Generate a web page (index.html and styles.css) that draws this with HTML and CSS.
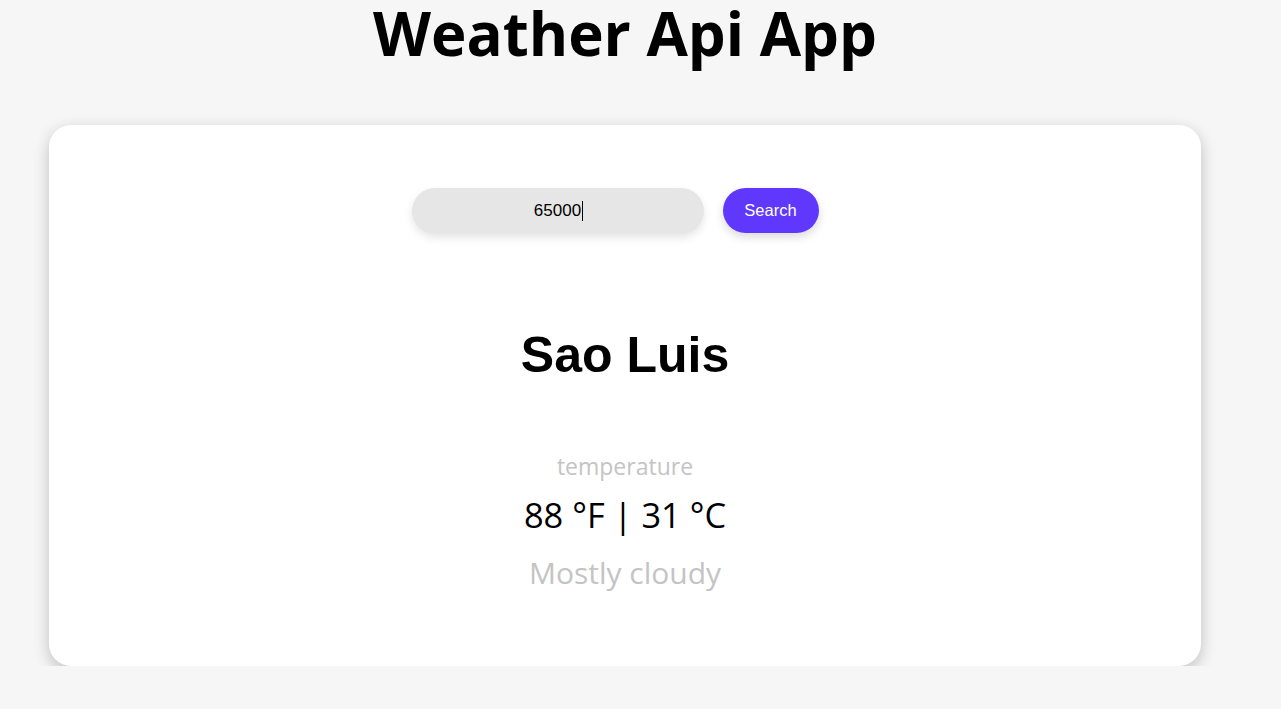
FILE: index.html
```html
<!DOCTYPE html>
<html lang="en">
<head>
<meta charset="utf-8">
<title>Weather Api App</title>
<link rel="stylesheet" href="styles.css">
</head>
<body>
<div class="app">
  <h1 class="title">Weather Api App</h1>
  <main class="card">
    <form class="search" onsubmit="return false">
      <div class="search-field">
        <input class="search-input" type="text" value="65000" autofocus>
        <span class="caret"></span>
      </div>
      <button class="search-btn" type="submit">Search</button>
    </form>
    <h2 class="city">Sao Luis</h2>
    <div class="weather">
      <p class="label">temperature</p>
      <p class="temp">88 °F | 31 °C</p>
      <p class="desc">Mostly cloudy</p>
    </div>
  </main>
</div>
</body>
</html>
```
FILE: styles.css
```css
html, body {
  margin: 0;
  padding: 0;
  background: #f6f6f6;
}
body {
  font-family: "Open Sans", "Noto Sans", sans-serif;
  color: #000;
}
.app {
  width: 1250px;
  display: flex;
  flex-direction: column;
  align-items: center;
}
.title {
  margin: 0;
  font-size: 60px;
  font-weight: 700;
  line-height: 67px;
}
.card {
  box-sizing: border-box;
  width: 1152px;
  height: 541px;
  margin-top: 58px;
  background: #fff;
  border-radius: 22px;
  box-shadow: 0 5px 16px rgba(0, 0, 0, 0.22);
  display: flex;
  flex-direction: column;
  align-items: center;
  padding-top: 63px;
}
.search {
  display: flex;
  gap: 19px;
  margin-left: -20px;
}
.search-field {
  position: relative;
  display: flex;
}
.search-input {
  box-sizing: border-box;
  width: 292px;
  height: 46px;
  border: none;
  outline: none;
  border-radius: 23px;
  background: #e6e6e6;
  box-shadow: 0 4px 8px rgba(0, 0, 0, 0.1);
  font-family: "Liberation Sans", Arial, sans-serif;
  font-size: 17px;
  text-align: center;
  color: #000;
  caret-color: transparent;
}
.caret {
  position: absolute;
  left: 170px;
  top: 13px;
  width: 1px;
  height: 20px;
  background: #000;
}
.search-btn {
  box-sizing: border-box;
  width: 96px;
  height: 45px;
  border: none;
  border-radius: 23px;
  background: #6038fd;
  color: #fff;
  font-family: "Liberation Sans", Arial, sans-serif;
  font-size: 16.5px;
  box-shadow: 0 4px 10px rgba(0, 0, 0, 0.15);
}
.city {
  margin: 93px 0 0;
  font-family: "Liberation Sans", Arial, sans-serif;
  font-size: 50px;
  font-weight: 700;
  line-height: 56px;
}
.weather {
  margin-top: 68px;
  display: flex;
  flex-direction: column;
  align-items: center;
}
.weather p {
  margin: 0;
}
.label {
  font-size: 23px;
  line-height: 30px;
  color: #c4c4c4;
}
.weather .temp {
  font-size: 34.4px;
  line-height: 52px;
  margin-top: 8px;
}
.weather .desc {
  font-size: 30px;
  line-height: 44px;
  margin-top: 10px;
  color: #c4c4c4;
}
```
